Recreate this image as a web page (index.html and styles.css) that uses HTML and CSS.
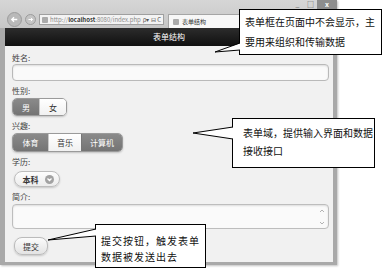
FILE: index.html
```html
<!DOCTYPE html>
<html lang="zh-CN">
<head>
  <meta charset="UTF-8" />
  <title>表单结构</title>
  <link rel="stylesheet" href="styles.css">
</head>
<body>
  <div class="scene">

    <div class="browser">
      <div class="titlebar">
        <span class="nav-btn nav-back">
          <svg viewBox="0 0 14 14"><path d="M10 7H4M6.5 4.5 4 7l2.5 2.5" fill="none" stroke="#fff" stroke-width="1.4"/></svg>
        </span>
        <span class="nav-btn nav-fwd">
          <svg viewBox="0 0 11 11"><path d="M3 5.5h5M6 3.5l2 2-2 2" fill="none" stroke="#fff" stroke-width="1.2"/></svg>
        </span>
        <div class="address">
          <span class="favicon"></span>
          <span class="url">http://<b>localhost</b>:8080/index.php</span>
          <span class="addr-icons">ρ▾ ⊟ C</span>
        </div>
        <div class="tab">
          <span class="favicon"></span>
          <span class="tab-title">表单结构</span>
        </div>
        <div class="controls">
          <span class="ctl">_</span>
          <span class="ctl">□</span>
          <span class="ctl ctl-close">x</span>
        </div>
      </div>

      <div class="page">
        <div class="page-header">表单结构</div>
        <form class="form">
          <div class="field">
            <label class="field-label">姓名:</label>
            <input class="text-input" type="text">
          </div>
          <div class="field">
            <label class="field-label">性别:</label>
            <div class="segmented seg-gender">
              <span class="seg seg-on w26">男</span>
              <span class="seg w27">女</span>
            </div>
          </div>
          <div class="field">
            <label class="field-label">兴趣:</label>
            <div class="segmented seg-hobby">
              <span class="seg seg-on w35">体育</span>
              <span class="seg w33">音乐</span>
              <span class="seg seg-on w41">计算机</span>
            </div>
          </div>
          <div class="field">
            <label class="field-label">学历:</label>
            <div class="select-btn">
              <span>本科</span>
              <span class="select-icon">
                <svg viewBox="0 0 9 9"><path d="M2.5 3.5 4.5 5.5 6.5 3.5" fill="none" stroke="#fff" stroke-width="1.3"/></svg>
              </span>
            </div>
          </div>
          <div class="field">
            <label class="field-label">简介:</label>
            <div class="textarea">
              <span class="spin">
                <svg viewBox="0 0 6 20"><path d="M1 5 3 3 5 5M1 15 3 17 5 15" fill="none" stroke="#aaa" stroke-width="0.9"/></svg>
              </span>
            </div>
          </div>
          <button class="submit" type="button">提交</button>
        </form>
      </div>
    </div>

    <div class="callout callout-a">表单框在页面中不会显示，主<br>要用来组织和传输数据</div>
    <div class="callout callout-b">表单域，提供输入界面和数据<br>接收接口</div>
    <div class="callout callout-c">提交按钮，触发表单<br>数据被发送出去</div>

    <svg class="tails" viewBox="0 0 384 270" width="384" height="270">
      <polygon points="240.5,43 215,52 240.5,50" fill="#fff"/>
      <polyline points="240,43 215,52 240,50" fill="none" stroke="#000" stroke-width="1"/>
      <polygon points="233.5,127 193,133 233.5,139" fill="#fff"/>
      <polyline points="233,127 193,133 233,139" fill="none" stroke="#000" stroke-width="1"/>
      <polygon points="96.5,229 48,240 96.5,236" fill="#fff"/>
      <polyline points="96,229 48,240 96,236" fill="none" stroke="#000" stroke-width="1"/>
    </svg>

  </div>
</body>
</html>
```

FILE: styles.css
```css
body {
  margin: 0;
  background: #fff;
  font-family: "Noto Sans CJK SC", "Liberation Sans", sans-serif;
}

.scene {
  position: relative;
  width: 384px;
  height: 270px;
  overflow: hidden;
}

/* Browser window */
.browser {
  width: 337px;
  height: 265px;
  display: flex;
  flex-direction: column;
  background: #a9a9a9;
  box-shadow: 1px 1px 2px rgba(0,0,0,0.25);
}

.titlebar {
  height: 28px;
  flex: none;
  display: flex;
  align-items: flex-start;
  padding-left: 7px;
  background: linear-gradient(#d6d6d6, #c6c6c6);
}

.nav-btn {
  display: flex;
  align-items: center;
  justify-content: center;
  border-radius: 50%;
  border: 1px solid #9c9c9c;
  background: #b9b9b9;
  box-sizing: border-box;
}

.nav-btn svg {
  width: 100%;
  height: 100%;
}

.nav-back {
  width: 15px;
  height: 15px;
  margin-top: 12px;
}

.nav-fwd {
  width: 11px;
  height: 11px;
  margin-top: 14px;
  margin-left: 3px;
  background: #c4c4c4;
}

.address {
  width: 125px;
  height: 11px;
  margin-top: 14px;
  margin-left: 3px;
  display: flex;
  align-items: center;
  gap: 2px;
  padding: 0 2px;
  box-sizing: border-box;
  background: #f3f3f3;
  border: 1px solid #9f9f9f;
  font-size: 6px;
  line-height: 9px;
  color: #8a8a8a;
  white-space: nowrap;
}

.address b {
  color: #333;
}

.favicon {
  width: 6px;
  height: 6px;
  flex: none;
  background: #aaa;
  border-radius: 1px;
}

.url {
  flex: 1;
  min-width: 0;
  overflow: hidden;
}

.addr-icons {
  flex: none;
  color: #555;
}

.tab {
  width: 80px;
  height: 14px;
  margin-top: 14px;
  margin-left: 4px;
  display: flex;
  align-items: center;
  gap: 3px;
  padding-left: 4px;
  box-sizing: border-box;
  background: #f7f7f7;
  border: 1px solid #a5a5a5;
  border-bottom: none;
  font-size: 6px;
  color: #333;
}

.controls {
  margin-left: auto;
  display: flex;
  height: 9px;
}

.ctl {
  width: 13px;
  height: 9px;
  font-size: 7px;
  line-height: 9px;
  text-align: center;
  color: #555;
}

.ctl-close {
  width: 20px;
  background: #8d8d8d;
  color: #fff;
  font-weight: bold;
}

/* Page */
.page {
  flex: 1;
  margin: 0 4px 3px 5px;
  background: #f1f1f1;
  display: flex;
  flex-direction: column;
}

.page-header {
  height: 18px;
  line-height: 18px;
  text-align: center;
  color: #fff;
  font-size: 8px;
  background: linear-gradient(#2c2c2c, #101010);
}

.form {
  padding: 5px 4px 0 7px;
  display: flex;
  flex-direction: column;
  align-items: flex-start;
}

.field {
  display: flex;
  flex-direction: column;
  align-items: flex-start;
  align-self: stretch;
  margin-bottom: 3px;
}

.field-label {
  height: 13px;
  line-height: 13px;
  font-size: 8px;
  color: #444;
}

.text-input {
  align-self: stretch;
  height: 17px;
  margin: 0;
  box-sizing: border-box;
  border: 1px solid #b9b9b9;
  border-radius: 4px;
  background: #fafafa;
  box-shadow: inset 0 1px 2px rgba(0,0,0,0.12);
  outline: none;
}

.segmented {
  display: flex;
  margin-top: 1px;
  border: 1px solid #9a9a9a;
  border-radius: 5px;
  overflow: hidden;
  box-shadow: 0 1px 2px rgba(0,0,0,0.2);
}

.seg-gender .seg {
  height: 16px;
}

.seg-hobby .seg {
  height: 17px;
}

.seg {
  display: flex;
  align-items: center;
  justify-content: center;
  font-size: 8px;
  color: #333;
  background: linear-gradient(#ffffff, #f1f1f1);
  border-left: 1px solid #c8c8c8;
  box-sizing: border-box;
}

.seg:first-child {
  border-left: none;
}

.seg-on {
  background: linear-gradient(#8a8a8a, #747474);
  color: #fff;
  border-left-color: #777;
}

.w26 { width: 26px; }
.w27 { width: 27px; }
.w33 { width: 33px; }
.w35 { width: 35px; }
.w41 { width: 41px; }

.select-btn {
  margin-top: 3px;
  margin-left: 2px;
  width: 46px;
  height: 16px;
  box-sizing: border-box;
  display: flex;
  align-items: center;
  justify-content: center;
  gap: 6px;
  padding-left: 2px;
  border: 1px solid #bdbdbd;
  border-radius: 8px;
  background: linear-gradient(#fdfdfd, #ececec);
  box-shadow: 0 1px 2px rgba(0,0,0,0.18);
  font-size: 8px;
  font-weight: bold;
  color: #333;
}

.select-icon {
  width: 9px;
  height: 9px;
  border-radius: 50%;
  background: #a2a2a2;
  display: flex;
}

.select-icon svg {
  width: 9px;
  height: 9px;
}

.textarea {
  align-self: stretch;
  height: 25px;
  margin-top: 1px;
  box-sizing: border-box;
  border: 1px solid #bdbdbd;
  border-radius: 4px;
  background: #fafafa;
  box-shadow: inset 0 1px 2px rgba(0,0,0,0.12);
  display: flex;
  justify-content: flex-end;
  align-items: center;
  padding-right: 3px;
}

.spin svg {
  width: 6px;
  height: 20px;
  display: block;
}

.submit {
  margin: 5px 0 0 2px;
  width: 34px;
  height: 18px;
  padding: 0;
  border: 1px solid #bbb;
  border-radius: 8px;
  background: linear-gradient(#fbfbfb, #e3e3e3);
  box-shadow: 0 1px 2px rgba(0,0,0,0.18);
  font-family: inherit;
  font-size: 8px;
  color: #333;
}

/* Callouts over the screenshot */
.callout {
  position: absolute;
  box-sizing: border-box;
  background: #fff;
  border: 1px solid #000;
  color: #111;
  font-size: 10px;
  white-space: nowrap;
}

.callout-a {
  left: 239px;
  top: 9px;
  width: 143px;
  height: 46px;
  padding: 2px 0 0 5px;
  line-height: 20px;
}

.callout-b {
  left: 232px;
  top: 118px;
  width: 143px;
  height: 50px;
  padding: 5px 0 0 10px;
  line-height: 18px;
}

.callout-c {
  left: 95px;
  top: 224px;
  width: 111px;
  height: 44px;
  padding: 8px 0 0 5px;
  line-height: 16px;
  letter-spacing: 1px;
}

.tails {
  position: absolute;
  left: 0;
  top: 0;
  pointer-events: none;
}
```
